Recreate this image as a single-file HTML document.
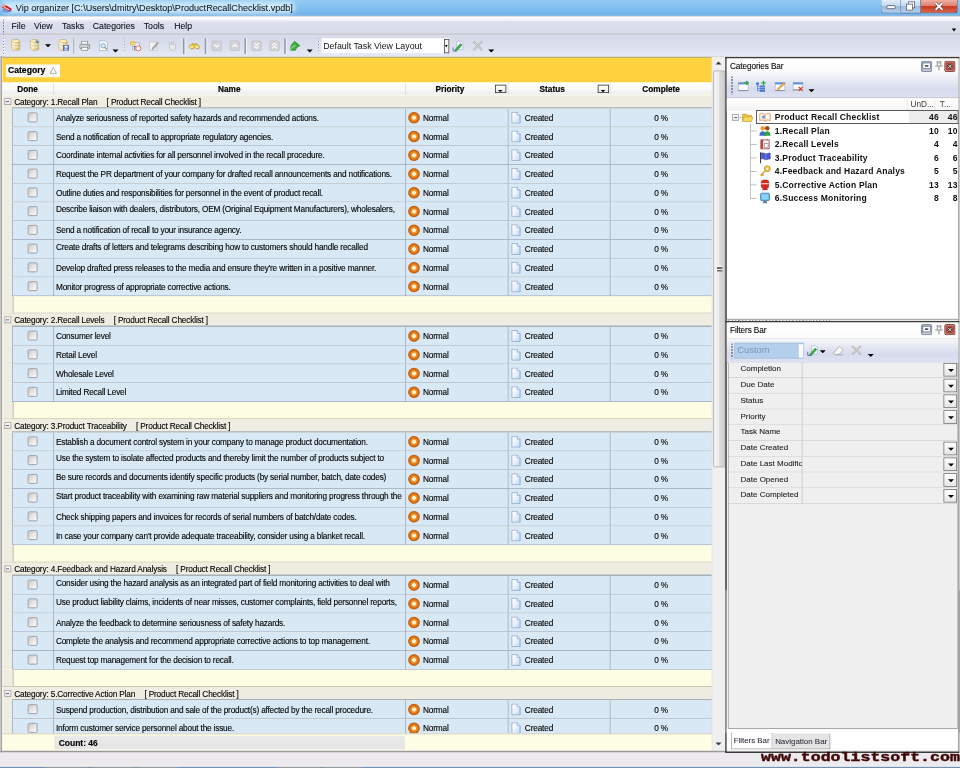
<!DOCTYPE html><html><head><meta charset="utf-8"><style>
*{box-sizing:border-box}
html,body{margin:0;padding:0;width:960px;height:768px;overflow:hidden;background:#eceaec}
#root{position:absolute;left:0;top:0;width:1280px;height:1024px;transform:scale(0.75);transform-origin:0 0;overflow:hidden;font-family:"Liberation Sans",sans-serif;color:#000;background:#eceaec}
.a{position:absolute}
#title{left:0;top:0;width:1280px;height:22.3px;background:linear-gradient(#92cbf4,#6fb4ec);border-bottom:1.2px solid #8c9cac}
#title .t{position:absolute;left:21px;top:3.5px;font-size:12.1px;letter-spacing:0px;color:#101820;-webkit-text-stroke:0.1px #101820;white-space:pre}
#menu{left:0;top:22.3px;width:1280px;height:24.2px;background:linear-gradient(#ffffff 0,#f4f5fa 20%,#dcdfec 32%,#d8dce9 100%);border-bottom:1px solid #a4a8b4}
#menu span{position:absolute;top:6px;font-size:11.6px;color:#10101c;-webkit-text-stroke:0.12px #10101c}
#tool{left:0;top:46.5px;width:1280px;height:29.5px;background:linear-gradient(#d6dae8,#dde1ee 60%,#e6e9f5);border-bottom:1.3px solid #d4d2c8}
#gridborder{left:0;top:74.5px;width:2.7px;height:928px;background:#a3a3a3;border-left:1.2px solid #d4d4d4}
#grid{left:2.7px;top:76px;width:964px;height:925px;background:#fefde8;overflow:hidden}
#band{position:absolute;left:0;top:0;width:947px;height:34px;background:#fed23e;border-top:1.3px solid #aaa27c}
#chip{position:absolute;left:5.3px;top:8.7px;width:72px;height:17.3px;background:linear-gradient(#ffffff,#f6f5ef);font-weight:bold;font-size:11.5px;-webkit-text-stroke:0.25px #000}
#chip span{position:absolute;left:2.6px;top:1.5px}
#chip i{position:absolute;left:62px;top:4px;width:0;height:0;border-left:4px solid transparent;border-right:4px solid transparent;border-bottom:8px solid #a8a8a8}
#chip i:after{content:"";position:absolute;left:-2.5px;top:2.5px;border-left:2.5px solid transparent;border-right:2.5px solid transparent;border-bottom:4.5px solid #fff}
#hdr{position:absolute;left:0;top:34px;width:947px;height:16px;background:linear-gradient(#ffffff,#fafafa 50%,#ededed)}
#hdr div{position:absolute;top:0;height:16.5px;font-weight:bold;font-size:11px;text-align:center;line-height:16.5px;color:#000;-webkit-text-stroke:0.25px #000}
#hdr .sp{width:1px;background:#dcdcdc}
.fb{position:absolute;top:2.8px;width:14.7px;height:11.6px;border:1.3px solid #2a2a2a;background:linear-gradient(#fff,#e8e8e8)}
.fb:after{content:"";position:absolute;left:3.2px;top:6px;border-left:3.5px solid transparent;border-right:3.5px solid transparent;border-top:3.5px solid #000}
#view{position:absolute;left:0;top:50.5px;width:947px;height:851.5px;overflow:hidden;background:#fefde8}
.gh:after{content:"";position:absolute;left:13.6px;right:0;bottom:0;height:1.2px;background:#a6b0b8}
.gh{position:absolute;left:0;width:947px;height:18px;background:#efede2;font-size:11px;letter-spacing:-0.2px;color:#000;-webkit-text-stroke:0.15px #000}
.gh .ex{position:absolute;left:3.2px;top:4.6px;width:9px;height:9px;border:1px solid #9c9c9c;background:linear-gradient(#fff,#e6e6e6)}
.gh .ex:after{content:"";position:absolute;left:1.5px;top:3px;width:4px;height:1.2px;background:#3a3a6a}
.gh .gt{position:absolute;left:16.2px;top:3.3px;white-space:pre}
.gh .gt b{font-weight:normal;margin-left:12.3px}
.rw{position:absolute;left:0;width:947px;height:25px;background:#efede2}
.c{position:absolute;top:0;height:25px;background:#d9e8f5;border-bottom:1px solid #9ca9b6;border-left:1px solid #9ca9b6;font-size:11px;letter-spacing:-0.24px;color:#000;-webkit-text-stroke:0.15px #000;white-space:nowrap;overflow:hidden}
.dn{left:13.6px;width:54.7px}
.nm{left:68.3px;width:469.4px;padding-left:2.6px;line-height:24px}
.nm.top{line-height:18.5px}
.pr{left:537.7px;width:136.4px}
.st{left:674.1px;width:136.5px}
.cp{left:810.6px;width:136.4px;text-align:center;line-height:24px;border-right:1px solid #b8c0c8}
.cb{position:absolute;left:19.3px;top:5.3px;width:13.3px;height:13.3px;border:1.2px solid #8c8e92;border-radius:2px;background:linear-gradient(135deg,#c6c6c6,#e6e6e6 50%,#fbfbfb)}
.pi{position:absolute;left:2.6px;top:4.3px}
.pr span{position:absolute;left:22.6px;top:0;line-height:24px;font-size:11px;letter-spacing:-0.2px}
.di{position:absolute;left:3.3px;top:4.3px}
.st span{position:absolute;left:22px;top:0;line-height:24px;font-size:11px;letter-spacing:-0.2px}
.ft{position:absolute;left:0;width:947px;height:23px;background:#fdfde4;border-bottom:1.6px solid #b6b3a4}
.ft:before{content:"";position:absolute;left:0;top:0;width:14.6px;height:22px;background:#efede2;border-right:1px solid #aeaeae}
#sum{position:absolute;left:0;top:902px;width:947px;height:23.3px;background:#fefde6;border-top:1px solid #c8c4b4}
#sum .cnt{position:absolute;left:70.3px;top:2px;width:467px;height:17.7px;background:linear-gradient(#ebebeb,#e4e4e4);border-left:1px solid #d8d8d8;font-weight:bold;font-size:11.3px;padding-left:4.3px;line-height:19.5px;-webkit-text-stroke:0.2px #000}
#vs{position:absolute;left:946.6px;top:0;width:17.4px;height:925.3px;background:#f0f0f0;border-left:1px solid #e4e4e4}
#vs .up{position:absolute;left:0;top:0;width:16px;height:18px}
#vs .up:after{content:"";position:absolute;left:4px;top:6px;border-left:4px solid transparent;border-right:4px solid transparent;border-bottom:4.5px solid #3c3c3c}
#vs .dwn{position:absolute;left:0;top:907px;width:16px;height:18px}
#vs .dwn:after{content:"";position:absolute;left:4px;top:7px;border-left:4px solid transparent;border-right:4px solid transparent;border-top:4.5px solid #3c3c3c}
#vs .th{position:absolute;left:0.5px;top:18px;width:16px;height:529px;border:1px solid #a3a3a3;border-radius:2px;background:linear-gradient(90deg,#f6f6f6,#ececec 45%,#dadada 55%,#cfcfcf)}
#vs .th:after{content:"";position:absolute;left:4px;top:259px;width:7px;height:8px;background:repeating-linear-gradient(#6a6a6a 0,#6a6a6a 1px,#f0f0f0 1px,#f0f0f0 2px)}
#gbot{left:0;top:1001.3px;width:967px;height:2px;background:#9a9a9a}
#task{left:0;top:1021px;width:1280px;height:3px;background:linear-gradient(#8aa6c4,#6584a8);border-top:0.8px solid #fafafa}
.tb{position:absolute;top:0.5px;height:3px;background:#dcdcdc;border:1px solid #8a8a8a;border-bottom:none}
.panel{position:absolute;background:#fff;border:2px solid #3a3a3a;border-right:1.6px solid #5a5a5a}
#cat{left:967px;top:76px;width:312px;height:352px;border-bottom:none}
.ptitle{position:absolute;left:0;top:0;width:100%;height:20.3px;background:linear-gradient(#ffffff,#fbfbfc);border-bottom:1px solid #e6e6ea;font-size:10.5px;color:#202020}
.ptitle span{position:absolute;left:4.3px;top:4.3px;font-size:11px;letter-spacing:-0.15px;color:#000;-webkit-text-stroke:0.1px #000}
.pbtn{position:absolute;top:1.8px;width:14px;height:14px;border-radius:2px}
.ptool{position:absolute;left:0;width:100%;background:linear-gradient(#f6f7fb,#e4e7f2 35%,#d6dbed 65%,#dde1f1);border-bottom:1.3px solid #a6a8b2}
.th2{position:absolute;left:0;top:52.5px;width:100%;height:17px;background:linear-gradient(#ffffff,#f4f4f4);font-size:10.5px;color:#505050}
.tr{position:absolute;left:0;height:18px;width:100%;font-weight:bold;font-size:11.4px;letter-spacing:0.25px;color:#111;white-space:nowrap}
.tr .tx{position:absolute;left:64px;top:2.3px}
.tr .n1{position:absolute;right:26px;top:2.3px}
.tr .n2{position:absolute;right:1px;top:2.3px}
#filt{left:967px;top:427.5px;width:312px;height:576px;background:#f0f0f0}
.fr{position:absolute;left:2.3px;width:306px;height:21px;border-bottom:1px solid #d2d2d2;background:#efefef;font-size:10.7px;color:#222}
.fr .nmf{position:absolute;left:0;top:0;width:99px;height:20px;padding-left:16px;line-height:16.5px;-webkit-text-stroke:0.12px #222;border-right:1.3px solid #c4c4c4;white-space:nowrap;overflow:hidden}
.fr .dd{position:absolute;right:1px;top:1.3px;width:18px;height:18px;border:1px solid #6f6f6f;background:linear-gradient(#ffffff,#e6e6e6)}
.fr .dd:after{content:"";position:absolute;left:4.5px;top:7px;border-left:4px solid transparent;border-right:4px solid transparent;border-top:4.5px solid #000}
#wm{left:1014.7px;top:1002px;transform:scaleY(0.82);transform-origin:0 0;font-family:"Liberation Mono",monospace;font-weight:bold;font-size:22.1px;color:#3e0606;-webkit-text-stroke:0.7px #3e0606;white-space:pre;line-height:22px}
</style></head><body><div id="root"><svg width="0" height="0" style="position:absolute"><defs><radialGradient id="og" cx="50%" cy="50%" r="50%"><stop offset="0" stop-color="#fffbe8"/><stop offset="0.28" stop-color="#fff0c8"/><stop offset="0.38" stop-color="#f5a848"/><stop offset="0.55" stop-color="#e88420"/><stop offset="0.85" stop-color="#d06810"/><stop offset="1" stop-color="#b85a10"/></radialGradient><linearGradient id="dg" x1="0" y1="0" x2="1" y2="1"><stop offset="0" stop-color="#ffffff"/><stop offset="0.5" stop-color="#eaf2fb"/><stop offset="1" stop-color="#bcd4f0"/></linearGradient></defs></svg><div id="title" class="a"><div style="position:absolute;left:2px;top:2px;width:392px;height:16px;background:#cde8fa;border-radius:8px;filter:blur(3px)"></div><svg style="position:absolute;left:1px;top:3px" width="16" height="15" viewBox="0 0 16 15"><ellipse cx="8" cy="11" rx="6.5" ry="3" fill="#7a98d8"/><path d="M1 6c2-3 5-3 8-1l6 4-3 3-6-3c-2-1-4-1-5-3z" fill="#d82828"/><path d="M2 5l9 5" stroke="#fff" stroke-width="1.3"/><circle cx="4" cy="4" r="2" fill="#f0a0a0"/></svg><span class="t">Vip organizer [C:\Users\dmitry\Desktop\ProductRecallChecklist.vpdb]</span><div style="position:absolute;left:1174px;top:0;width:27px;height:18px;border:1px solid #5f7a9a;border-top:none;border-radius:0 0 0 5px;background:linear-gradient(#e2eefa,#c4d8ee 45%,#9dbbe0 50%,#b4cdea)"><div style="position:absolute;left:7px;top:7px;width:12px;height:5px;background:#fff;border:1px solid #4a5060;border-radius:1px"></div></div><div style="position:absolute;left:1201px;top:0;width:27px;height:18px;border:1px solid #5f7a9a;border-top:none;border-left:none;background:linear-gradient(#e2eefa,#c4d8ee 45%,#9dbbe0 50%,#b4cdea)"><div style="position:absolute;left:10px;top:2px;width:9px;height:9px;background:#fff;border:1.5px solid #4a5060"></div><div style="position:absolute;left:7px;top:5px;width:9px;height:9px;background:#fff;border:1.5px solid #4a5060"></div></div><div style="position:absolute;left:1228px;top:0;width:49px;height:18px;border:1px solid #7a3a30;border-top:none;border-left:none;border-radius:0 0 5px 0;background:linear-gradient(#f0b0a0,#e08070 45%,#c83a24 50%,#d86a50)"><svg style="position:absolute;left:17px;top:2px" width="14" height="13" viewBox="0 0 14 13"><path d="M2.5 2l9 9M11.5 2l-9 9" stroke="#4a2a2a" stroke-width="4"/><path d="M2.5 2l9 9M11.5 2l-9 9" stroke="#fff" stroke-width="2.4"/></svg></div></div><div id="menu" class="a"><div style="position:absolute;left:4.3px;top:4.5px;width:1.6px;height:20px;background:repeating-linear-gradient(#ffffff 0,#ffffff 1.6px,transparent 1.6px,transparent 4px)"></div><div style="position:absolute;left:3.5px;top:3.7px;width:1.6px;height:20px;background:repeating-linear-gradient(#6f7588 0,#6f7588 1.6px,transparent 1.6px,transparent 4px)"></div><span style="left:15.3px">File</span><span style="left:45.2px">View</span><span style="left:82.5px">Tasks</span><span style="left:123.7px">Categories</span><span style="left:191.6px">Tools</span><span style="left:232.3px">Help</span><div style="position:absolute;left:1269px;top:16px;border-left:3.3px solid transparent;border-right:3.3px solid transparent;border-top:4px solid #000"></div></div><div id="tool" class="a"><div style="position:absolute;left:4.3px;top:5.6px;width:1.6px;height:24px;background:repeating-linear-gradient(#ffffff 0,#ffffff 1.6px,transparent 1.6px,transparent 4px)"></div><div style="position:absolute;left:3.5px;top:4.8px;width:1.6px;height:24px;background:repeating-linear-gradient(#6f7588 0,#6f7588 1.6px,transparent 1.6px,transparent 4px)"></div><svg style="position:absolute;left:13px;top:5.5px" width="16" height="16" viewBox="0 0 16 16"><defs><linearGradient id="dbg" x1="0" x2="1" y1="0" y2="0"><stop offset="0" stop-color="#fffbe6"/><stop offset="0.35" stop-color="#f6ecc0"/><stop offset="1" stop-color="#cfb264"/></linearGradient></defs><path d="M2.5 2.8c0-2.4 11-2.4 11 0v10.4c0 2.6-11 2.6-11 0z" fill="url(#dbg)" stroke="#b39a52" stroke-width="0.7"/><ellipse cx="8" cy="2.8" rx="5.5" ry="1.9" fill="#fff4c0" stroke="#c0a45a" stroke-width="0.6"/><path d="M2.5 6.3c0 2.2 11 2.2 11 0M2.5 9.8c0 2.2 11 2.2 11 0" fill="none" stroke="#fffdf0" stroke-width="1"/><path d="M2.5 7c0 2.2 11 2.2 11 0M2.5 10.5c0 2.2 11 2.2 11 0" fill="none" stroke="#c8ae62" stroke-width="0.6"/></svg><svg style="position:absolute;left:38px;top:5.5px" width="16" height="16" viewBox="0 0 16 16"><defs><linearGradient id="dbg" x1="0" x2="1" y1="0" y2="0"><stop offset="0" stop-color="#fffbe6"/><stop offset="0.35" stop-color="#f6ecc0"/><stop offset="1" stop-color="#cfb264"/></linearGradient></defs><path d="M2.5 2.8c0-2.4 11-2.4 11 0v10.4c0 2.6-11 2.6-11 0z" fill="url(#dbg)" stroke="#b39a52" stroke-width="0.7"/><ellipse cx="8" cy="2.8" rx="5.5" ry="1.9" fill="#fff4c0" stroke="#c0a45a" stroke-width="0.6"/><path d="M2.5 6.3c0 2.2 11 2.2 11 0M2.5 9.8c0 2.2 11 2.2 11 0" fill="none" stroke="#fffdf0" stroke-width="1"/><path d="M2.5 7c0 2.2 11 2.2 11 0M2.5 10.5c0 2.2 11 2.2 11 0" fill="none" stroke="#c8ae62" stroke-width="0.6"/><path d="M10 1l4 3-2 1z" fill="#4a78c8"/><path d="M9.5 2.5l3 2.5" stroke="#4a78c8" stroke-width="1.6"/></svg><div style="position:absolute;left:59.5px;top:12.5px;width:0;height:0;border-left:4px solid transparent;border-right:4px solid transparent;border-top:4.5px solid #000"></div><svg style="position:absolute;left:76px;top:5.5px" width="16" height="16" viewBox="0 0 16 16"><defs><linearGradient id="dbg" x1="0" x2="1" y1="0" y2="0"><stop offset="0" stop-color="#fffbe6"/><stop offset="0.35" stop-color="#f6ecc0"/><stop offset="1" stop-color="#cfb264"/></linearGradient></defs><path d="M2.5 2.8c0-2.4 11-2.4 11 0v10.4c0 2.6-11 2.6-11 0z" fill="url(#dbg)" stroke="#b39a52" stroke-width="0.7"/><ellipse cx="8" cy="2.8" rx="5.5" ry="1.9" fill="#fff4c0" stroke="#c0a45a" stroke-width="0.6"/><path d="M2.5 6.3c0 2.2 11 2.2 11 0M2.5 9.8c0 2.2 11 2.2 11 0" fill="none" stroke="#fffdf0" stroke-width="1"/><path d="M2.5 7c0 2.2 11 2.2 11 0M2.5 10.5c0 2.2 11 2.2 11 0" fill="none" stroke="#c8ae62" stroke-width="0.6"/><rect x="8.5" y="8.5" width="7" height="7" fill="#5470c8" stroke="#2f3f88" stroke-width="0.6"/><rect x="10" y="9" width="4" height="2.6" fill="#fff"/><rect x="10" y="12.5" width="4" height="3" fill="#c8d4f0"/></svg><div style="position:absolute;left:97.5px;top:4px;width:1.6px;height:21px;background:#9096a6;box-shadow:1.3px 0 0 #f4f6fb"></div><svg style="position:absolute;left:105px;top:6px" width="16" height="16" viewBox="0 0 16 16"><rect x="4" y="2" width="8" height="4" fill="#fff" stroke="#777" stroke-width="0.8"/><rect x="1.5" y="6" width="13" height="6" rx="1" fill="#cfd3da" stroke="#6f747c" stroke-width="0.8"/><rect x="4" y="10" width="8" height="4" fill="#fff" stroke="#777" stroke-width="0.8"/><circle cx="12.5" cy="8" r="0.8" fill="#3a9a3a"/></svg><svg style="position:absolute;left:130px;top:6px" width="16" height="16" viewBox="0 0 16 16"><path d="M2.5 1.5h8l2.5 2.5v10.5h-10.5z" fill="#fafcff" stroke="#8ea3bf" stroke-width="0.8"/><circle cx="7.5" cy="8" r="3" fill="#d6ecfa" stroke="#5a8fc0" stroke-width="0.9"/><path d="M9.5 10l3 3" stroke="#d08a40" stroke-width="1.5"/></svg><div style="position:absolute;left:150.0px;top:19px;width:0;height:0;border-left:4px solid transparent;border-right:4px solid transparent;border-top:4.5px solid #000"></div><div style="position:absolute;left:166.3px;top:4.8px;width:1.6px;height:20px;background:repeating-linear-gradient(#ffffff 0,#ffffff 1.6px,transparent 1.6px,transparent 4px)"></div><div style="position:absolute;left:165.5px;top:4px;width:1.6px;height:20px;background:repeating-linear-gradient(#6f7588 0,#6f7588 1.6px,transparent 1.6px,transparent 4px)"></div><svg style="position:absolute;left:173px;top:6px" width="16" height="16" viewBox="0 0 16 16"><path d="M4 4h9v10h-9z" fill="#eef3fb" stroke="#8aa0c0" stroke-width="0.8"/><path d="M1 2h6l1 1.5h-7z" fill="#f0d060"/><rect x="1" y="3" width="6" height="4" fill="#f5dc70" stroke="#c8a030" stroke-width="0.6"/><text x="5" y="13" font-size="6" font-weight="bold" fill="#333" font-family="Liberation Sans">T</text><circle cx="11.5" cy="11.5" r="3.4" fill="#fff" stroke="#e04040" stroke-width="1"/></svg><svg style="position:absolute;left:197px;top:6px" width="16" height="16" viewBox="0 0 16 16"><rect x="2" y="3" width="10" height="11" fill="#f4f4f4" stroke="#b8b8b8" stroke-width="0.8"/><path d="M6 11l7-8 1.5 1.5-7 8-2 .5z" fill="#b0b0b0" stroke="#8a8a8a" stroke-width="0.6"/></svg><svg style="position:absolute;left:221px;top:6px" width="16" height="16" viewBox="0 0 16 16"><path d="M5 8c0-2 1-3 2-2l1 1V3c0-1 2-1 2 0v4l1-1c1-.5 2 0 2 1v4c0 2-1 3-3 3H8c-2 0-3-2-3-3z" fill="#e8e8e8" stroke="#b0b0b0" stroke-width="0.7"/><path d="M2 3l2 2M4 2l1 2" stroke="#bbb" stroke-width="0.8"/></svg><div style="position:absolute;left:244px;top:4px;width:1.6px;height:21px;background:#9096a6;box-shadow:1.3px 0 0 #f4f6fb"></div><svg style="position:absolute;left:250.5px;top:6px" width="16" height="16" viewBox="0 0 16 16"><path d="M1 9l4-4 3 1 3-1 4 4-1 3-3 0-2-2-2 2-3 0z" fill="#e8c040" stroke="#a08020" stroke-width="0.7"/><ellipse cx="4.5" cy="9.5" rx="2.5" ry="1.5" fill="#f8e8a0"/><ellipse cx="11.5" cy="9.5" rx="2.5" ry="1.5" fill="#f8e8a0"/></svg><div style="position:absolute;left:273px;top:4px;width:1.6px;height:21px;background:#9096a6;box-shadow:1.3px 0 0 #f4f6fb"></div><svg style="position:absolute;left:280.5px;top:6px" width="16" height="16" viewBox="0 0 16 16"><rect x="1.5" y="1.5" width="13" height="13" rx="2" fill="#d2d3d6" stroke="#bcbdc2" stroke-width="0.8"/><path d="M5 6.5l3 3 3-3" fill="none" stroke="#fff" stroke-width="1.6"/></svg><svg style="position:absolute;left:305px;top:6px" width="16" height="16" viewBox="0 0 16 16"><rect x="1.5" y="1.5" width="13" height="13" rx="2" fill="#d2d3d6" stroke="#bcbdc2" stroke-width="0.8"/><path d="M5 9.5l3-3 3 3" fill="none" stroke="#fff" stroke-width="1.6"/></svg><div style="position:absolute;left:326px;top:4px;width:1.6px;height:21px;background:#9096a6;box-shadow:1.3px 0 0 #f4f6fb"></div><svg style="position:absolute;left:334px;top:6px" width="16" height="16" viewBox="0 0 16 16"><rect x="1.5" y="1.5" width="13" height="13" rx="2" fill="#d2d3d6" stroke="#bcbdc2" stroke-width="0.8"/><path d="M5 4.5l3 3 3-3M5 8.5l3 3 3-3" fill="none" stroke="#fff" stroke-width="1.4"/></svg><svg style="position:absolute;left:357.5px;top:6px" width="16" height="16" viewBox="0 0 16 16"><rect x="1.5" y="1.5" width="13" height="13" rx="2" fill="#d2d3d6" stroke="#bcbdc2" stroke-width="0.8"/><path d="M5 7.5l3-3 3 3M5 11.5l3-3 3 3" fill="none" stroke="#fff" stroke-width="1.4"/></svg><div style="position:absolute;left:379px;top:4px;width:1.6px;height:21px;background:#9096a6;box-shadow:1.3px 0 0 #f4f6fb"></div><svg style="position:absolute;left:385px;top:6px" width="16" height="16" viewBox="0 0 16 16"><path d="M2 14c0-5 2-9 6-12l7 6c-3 1-5 3-6 6z" fill="#3fae3f" stroke="#1f7a2a" stroke-width="0.7"/><path d="M2 14c1-3 3-5 7-6" fill="none" stroke="#cfe8cf" stroke-width="1.2"/></svg><div style="position:absolute;left:408.5px;top:19px;width:0;height:0;border-left:4px solid transparent;border-right:4px solid transparent;border-top:4.5px solid #000"></div><div style="position:absolute;left:424.3px;top:4.8px;width:1.6px;height:20px;background:repeating-linear-gradient(#ffffff 0,#ffffff 1.6px,transparent 1.6px,transparent 4px)"></div><div style="position:absolute;left:423.5px;top:4px;width:1.6px;height:20px;background:repeating-linear-gradient(#6f7588 0,#6f7588 1.6px,transparent 1.6px,transparent 4px)"></div><div style="position:absolute;left:429px;top:4.3px;width:170px;height:20.5px;background:#fff;font-size:11.75px;line-height:20px;padding-left:2px;color:#111;white-space:nowrap">Default Task View Layout<div style="position:absolute;left:163px;top:1px;width:7px;height:19px;border:1px solid #3c3c3c;background:#f6f6f6"></div><div style="position:absolute;left:164px;top:9px;border-left:2.5px solid transparent;border-right:2.5px solid transparent;border-top:3px solid #000"></div></div><svg style="position:absolute;left:603px;top:6px" width="16" height="16" viewBox="0 0 16 16"><path d="M6 2h6l2 2v9h-8z" fill="#eef4fb" stroke="#9ab0cc" stroke-width="0.7"/><path d="M3 14l8-9 2 2-8 9z" fill="#3cae4a" stroke="#1f7a2a" stroke-width="0.6"/><path d="M1 10v5h4" fill="none" stroke="#6a6ac8" stroke-width="1.3"/></svg><svg style="position:absolute;left:629px;top:6px" width="16" height="16" viewBox="0 0 16 16"><path d="M3 3l10 10M13 3l-10 10" stroke="#b8b8b8" stroke-width="2.6" stroke-linecap="round"/><path d="M3 3l10 10M13 3l-10 10" stroke="#d8d8d8" stroke-width="1"/></svg><div style="position:absolute;left:650.5px;top:19px;width:0;height:0;border-left:4px solid transparent;border-right:4px solid transparent;border-top:4.5px solid #000"></div></div><div id="gridborder" class="a"></div><div id="grid" class="a"><div id="band"><div id="chip"><span>Category</span><svg style="position:absolute;left:58.5px;top:3.5px" width="10" height="10" viewBox="0 0 10 10"><path d="M5 1L9.2 8.8H0.8z" fill="#fff" stroke="#a0a0a0" stroke-width="1.1"/></svg></div></div><div id="hdr"><div style="left:0;width:68.3px">Done</div><div class="sp" style="left:68.3px"></div><div style="left:68.3px;width:469.4px">Name</div><div class="sp" style="left:537.7px"></div><div style="left:537.7px;width:119px">Priority</div><span class="fb" style="left:657.3px"></span><div class="sp" style="left:674.1px"></div><div style="left:674.1px;width:119px">Status</div><span class="fb" style="left:794.6px"></span><div class="sp" style="left:810.6px"></div><div style="left:810.6px;width:136.4px">Complete</div></div><div id="view"><div class="gh" style="top:0px"><span class="ex"></span><span class="gt">Category: 1.Recall Plan<b>[ Product Recall Checklist ]</b></span></div><div class="rw" style="top:18px"><div class="c dn"><span class="cb"></span></div><div class="c nm">Analyze seriousness of reported safety hazards and recommended actions.</div><div class="c pr"><svg class="pi" width="16" height="16" viewBox="0 0 16 16"><circle cx="8" cy="8" r="7.6" fill="url(#og)"/><circle cx="8" cy="8" r="7.1" fill="none" stroke="#c46010" stroke-width="0.8" stroke-dasharray="1 0.6"/></svg><span>Normal</span></div><div class="c st"><svg class="di" width="14" height="16" viewBox="0 0 14 16"><path d="M1.5 0.8h7.2l3.8 3.8v10.6h-11z" fill="url(#dg)" stroke="#7f9cc4" stroke-width="0.9"/><path d="M8.7 0.8v3.8h3.8" fill="#eef4fb" stroke="#7f9cc4" stroke-width="0.9"/><path d="M11.8 5.5v9" stroke="#a8c4e8" stroke-width="1.2"/></svg><span>Created</span></div><div class="c cp">0 %</div></div><div class="rw" style="top:43px"><div class="c dn"><span class="cb"></span></div><div class="c nm">Send a notification of recall to appropriate regulatory agencies.</div><div class="c pr"><svg class="pi" width="16" height="16" viewBox="0 0 16 16"><circle cx="8" cy="8" r="7.6" fill="url(#og)"/><circle cx="8" cy="8" r="7.1" fill="none" stroke="#c46010" stroke-width="0.8" stroke-dasharray="1 0.6"/></svg><span>Normal</span></div><div class="c st"><svg class="di" width="14" height="16" viewBox="0 0 14 16"><path d="M1.5 0.8h7.2l3.8 3.8v10.6h-11z" fill="url(#dg)" stroke="#7f9cc4" stroke-width="0.9"/><path d="M8.7 0.8v3.8h3.8" fill="#eef4fb" stroke="#7f9cc4" stroke-width="0.9"/><path d="M11.8 5.5v9" stroke="#a8c4e8" stroke-width="1.2"/></svg><span>Created</span></div><div class="c cp">0 %</div></div><div class="rw" style="top:68px"><div class="c dn"><span class="cb"></span></div><div class="c nm">Coordinate internal activities for all personnel involved in the recall procedure.</div><div class="c pr"><svg class="pi" width="16" height="16" viewBox="0 0 16 16"><circle cx="8" cy="8" r="7.6" fill="url(#og)"/><circle cx="8" cy="8" r="7.1" fill="none" stroke="#c46010" stroke-width="0.8" stroke-dasharray="1 0.6"/></svg><span>Normal</span></div><div class="c st"><svg class="di" width="14" height="16" viewBox="0 0 14 16"><path d="M1.5 0.8h7.2l3.8 3.8v10.6h-11z" fill="url(#dg)" stroke="#7f9cc4" stroke-width="0.9"/><path d="M8.7 0.8v3.8h3.8" fill="#eef4fb" stroke="#7f9cc4" stroke-width="0.9"/><path d="M11.8 5.5v9" stroke="#a8c4e8" stroke-width="1.2"/></svg><span>Created</span></div><div class="c cp">0 %</div></div><div class="rw" style="top:93px"><div class="c dn"><span class="cb"></span></div><div class="c nm">Request the PR department of your company for drafted recall announcements and notifications.</div><div class="c pr"><svg class="pi" width="16" height="16" viewBox="0 0 16 16"><circle cx="8" cy="8" r="7.6" fill="url(#og)"/><circle cx="8" cy="8" r="7.1" fill="none" stroke="#c46010" stroke-width="0.8" stroke-dasharray="1 0.6"/></svg><span>Normal</span></div><div class="c st"><svg class="di" width="14" height="16" viewBox="0 0 14 16"><path d="M1.5 0.8h7.2l3.8 3.8v10.6h-11z" fill="url(#dg)" stroke="#7f9cc4" stroke-width="0.9"/><path d="M8.7 0.8v3.8h3.8" fill="#eef4fb" stroke="#7f9cc4" stroke-width="0.9"/><path d="M11.8 5.5v9" stroke="#a8c4e8" stroke-width="1.2"/></svg><span>Created</span></div><div class="c cp">0 %</div></div><div class="rw" style="top:118px"><div class="c dn"><span class="cb"></span></div><div class="c nm">Outline duties and responsibilities for personnel in the event of product recall.</div><div class="c pr"><svg class="pi" width="16" height="16" viewBox="0 0 16 16"><circle cx="8" cy="8" r="7.6" fill="url(#og)"/><circle cx="8" cy="8" r="7.1" fill="none" stroke="#c46010" stroke-width="0.8" stroke-dasharray="1 0.6"/></svg><span>Normal</span></div><div class="c st"><svg class="di" width="14" height="16" viewBox="0 0 14 16"><path d="M1.5 0.8h7.2l3.8 3.8v10.6h-11z" fill="url(#dg)" stroke="#7f9cc4" stroke-width="0.9"/><path d="M8.7 0.8v3.8h3.8" fill="#eef4fb" stroke="#7f9cc4" stroke-width="0.9"/><path d="M11.8 5.5v9" stroke="#a8c4e8" stroke-width="1.2"/></svg><span>Created</span></div><div class="c cp">0 %</div></div><div class="rw" style="top:143px"><div class="c dn"><span class="cb"></span></div><div class="c nm top">Describe liaison with dealers, distributors, OEM (Original Equipment Manufacturers), wholesalers,</div><div class="c pr"><svg class="pi" width="16" height="16" viewBox="0 0 16 16"><circle cx="8" cy="8" r="7.6" fill="url(#og)"/><circle cx="8" cy="8" r="7.1" fill="none" stroke="#c46010" stroke-width="0.8" stroke-dasharray="1 0.6"/></svg><span>Normal</span></div><div class="c st"><svg class="di" width="14" height="16" viewBox="0 0 14 16"><path d="M1.5 0.8h7.2l3.8 3.8v10.6h-11z" fill="url(#dg)" stroke="#7f9cc4" stroke-width="0.9"/><path d="M8.7 0.8v3.8h3.8" fill="#eef4fb" stroke="#7f9cc4" stroke-width="0.9"/><path d="M11.8 5.5v9" stroke="#a8c4e8" stroke-width="1.2"/></svg><span>Created</span></div><div class="c cp">0 %</div></div><div class="rw" style="top:168px"><div class="c dn"><span class="cb"></span></div><div class="c nm">Send a notification of recall to your insurance agency.</div><div class="c pr"><svg class="pi" width="16" height="16" viewBox="0 0 16 16"><circle cx="8" cy="8" r="7.6" fill="url(#og)"/><circle cx="8" cy="8" r="7.1" fill="none" stroke="#c46010" stroke-width="0.8" stroke-dasharray="1 0.6"/></svg><span>Normal</span></div><div class="c st"><svg class="di" width="14" height="16" viewBox="0 0 14 16"><path d="M1.5 0.8h7.2l3.8 3.8v10.6h-11z" fill="url(#dg)" stroke="#7f9cc4" stroke-width="0.9"/><path d="M8.7 0.8v3.8h3.8" fill="#eef4fb" stroke="#7f9cc4" stroke-width="0.9"/><path d="M11.8 5.5v9" stroke="#a8c4e8" stroke-width="1.2"/></svg><span>Created</span></div><div class="c cp">0 %</div></div><div class="rw" style="top:193px"><div class="c dn"><span class="cb"></span></div><div class="c nm top">Create drafts of letters and telegrams describing how to customers should handle recalled</div><div class="c pr"><svg class="pi" width="16" height="16" viewBox="0 0 16 16"><circle cx="8" cy="8" r="7.6" fill="url(#og)"/><circle cx="8" cy="8" r="7.1" fill="none" stroke="#c46010" stroke-width="0.8" stroke-dasharray="1 0.6"/></svg><span>Normal</span></div><div class="c st"><svg class="di" width="14" height="16" viewBox="0 0 14 16"><path d="M1.5 0.8h7.2l3.8 3.8v10.6h-11z" fill="url(#dg)" stroke="#7f9cc4" stroke-width="0.9"/><path d="M8.7 0.8v3.8h3.8" fill="#eef4fb" stroke="#7f9cc4" stroke-width="0.9"/><path d="M11.8 5.5v9" stroke="#a8c4e8" stroke-width="1.2"/></svg><span>Created</span></div><div class="c cp">0 %</div></div><div class="rw" style="top:218px"><div class="c dn"><span class="cb"></span></div><div class="c nm">Develop drafted press releases to the media and ensure they're written in a positive manner.</div><div class="c pr"><svg class="pi" width="16" height="16" viewBox="0 0 16 16"><circle cx="8" cy="8" r="7.6" fill="url(#og)"/><circle cx="8" cy="8" r="7.1" fill="none" stroke="#c46010" stroke-width="0.8" stroke-dasharray="1 0.6"/></svg><span>Normal</span></div><div class="c st"><svg class="di" width="14" height="16" viewBox="0 0 14 16"><path d="M1.5 0.8h7.2l3.8 3.8v10.6h-11z" fill="url(#dg)" stroke="#7f9cc4" stroke-width="0.9"/><path d="M8.7 0.8v3.8h3.8" fill="#eef4fb" stroke="#7f9cc4" stroke-width="0.9"/><path d="M11.8 5.5v9" stroke="#a8c4e8" stroke-width="1.2"/></svg><span>Created</span></div><div class="c cp">0 %</div></div><div class="rw" style="top:243px"><div class="c dn"><span class="cb"></span></div><div class="c nm">Monitor progress of appropriate corrective actions.</div><div class="c pr"><svg class="pi" width="16" height="16" viewBox="0 0 16 16"><circle cx="8" cy="8" r="7.6" fill="url(#og)"/><circle cx="8" cy="8" r="7.1" fill="none" stroke="#c46010" stroke-width="0.8" stroke-dasharray="1 0.6"/></svg><span>Normal</span></div><div class="c st"><svg class="di" width="14" height="16" viewBox="0 0 14 16"><path d="M1.5 0.8h7.2l3.8 3.8v10.6h-11z" fill="url(#dg)" stroke="#7f9cc4" stroke-width="0.9"/><path d="M8.7 0.8v3.8h3.8" fill="#eef4fb" stroke="#7f9cc4" stroke-width="0.9"/><path d="M11.8 5.5v9" stroke="#a8c4e8" stroke-width="1.2"/></svg><span>Created</span></div><div class="c cp">0 %</div></div><div class="ft" style="top:268px"></div><div class="gh" style="top:291px"><span class="ex"></span><span class="gt">Category: 2.Recall Levels<b>[ Product Recall Checklist ]</b></span></div><div class="rw" style="top:309px"><div class="c dn"><span class="cb"></span></div><div class="c nm">Consumer level</div><div class="c pr"><svg class="pi" width="16" height="16" viewBox="0 0 16 16"><circle cx="8" cy="8" r="7.6" fill="url(#og)"/><circle cx="8" cy="8" r="7.1" fill="none" stroke="#c46010" stroke-width="0.8" stroke-dasharray="1 0.6"/></svg><span>Normal</span></div><div class="c st"><svg class="di" width="14" height="16" viewBox="0 0 14 16"><path d="M1.5 0.8h7.2l3.8 3.8v10.6h-11z" fill="url(#dg)" stroke="#7f9cc4" stroke-width="0.9"/><path d="M8.7 0.8v3.8h3.8" fill="#eef4fb" stroke="#7f9cc4" stroke-width="0.9"/><path d="M11.8 5.5v9" stroke="#a8c4e8" stroke-width="1.2"/></svg><span>Created</span></div><div class="c cp">0 %</div></div><div class="rw" style="top:334px"><div class="c dn"><span class="cb"></span></div><div class="c nm">Retail Level</div><div class="c pr"><svg class="pi" width="16" height="16" viewBox="0 0 16 16"><circle cx="8" cy="8" r="7.6" fill="url(#og)"/><circle cx="8" cy="8" r="7.1" fill="none" stroke="#c46010" stroke-width="0.8" stroke-dasharray="1 0.6"/></svg><span>Normal</span></div><div class="c st"><svg class="di" width="14" height="16" viewBox="0 0 14 16"><path d="M1.5 0.8h7.2l3.8 3.8v10.6h-11z" fill="url(#dg)" stroke="#7f9cc4" stroke-width="0.9"/><path d="M8.7 0.8v3.8h3.8" fill="#eef4fb" stroke="#7f9cc4" stroke-width="0.9"/><path d="M11.8 5.5v9" stroke="#a8c4e8" stroke-width="1.2"/></svg><span>Created</span></div><div class="c cp">0 %</div></div><div class="rw" style="top:359px"><div class="c dn"><span class="cb"></span></div><div class="c nm">Wholesale Level</div><div class="c pr"><svg class="pi" width="16" height="16" viewBox="0 0 16 16"><circle cx="8" cy="8" r="7.6" fill="url(#og)"/><circle cx="8" cy="8" r="7.1" fill="none" stroke="#c46010" stroke-width="0.8" stroke-dasharray="1 0.6"/></svg><span>Normal</span></div><div class="c st"><svg class="di" width="14" height="16" viewBox="0 0 14 16"><path d="M1.5 0.8h7.2l3.8 3.8v10.6h-11z" fill="url(#dg)" stroke="#7f9cc4" stroke-width="0.9"/><path d="M8.7 0.8v3.8h3.8" fill="#eef4fb" stroke="#7f9cc4" stroke-width="0.9"/><path d="M11.8 5.5v9" stroke="#a8c4e8" stroke-width="1.2"/></svg><span>Created</span></div><div class="c cp">0 %</div></div><div class="rw" style="top:384px"><div class="c dn"><span class="cb"></span></div><div class="c nm">Limited Recall Level</div><div class="c pr"><svg class="pi" width="16" height="16" viewBox="0 0 16 16"><circle cx="8" cy="8" r="7.6" fill="url(#og)"/><circle cx="8" cy="8" r="7.1" fill="none" stroke="#c46010" stroke-width="0.8" stroke-dasharray="1 0.6"/></svg><span>Normal</span></div><div class="c st"><svg class="di" width="14" height="16" viewBox="0 0 14 16"><path d="M1.5 0.8h7.2l3.8 3.8v10.6h-11z" fill="url(#dg)" stroke="#7f9cc4" stroke-width="0.9"/><path d="M8.7 0.8v3.8h3.8" fill="#eef4fb" stroke="#7f9cc4" stroke-width="0.9"/><path d="M11.8 5.5v9" stroke="#a8c4e8" stroke-width="1.2"/></svg><span>Created</span></div><div class="c cp">0 %</div></div><div class="ft" style="top:409px"></div><div class="gh" style="top:432px"><span class="ex"></span><span class="gt">Category: 3.Product Traceability<b>[ Product Recall Checklist ]</b></span></div><div class="rw" style="top:450px"><div class="c dn"><span class="cb"></span></div><div class="c nm">Establish a document control system in your company to manage product documentation.</div><div class="c pr"><svg class="pi" width="16" height="16" viewBox="0 0 16 16"><circle cx="8" cy="8" r="7.6" fill="url(#og)"/><circle cx="8" cy="8" r="7.1" fill="none" stroke="#c46010" stroke-width="0.8" stroke-dasharray="1 0.6"/></svg><span>Normal</span></div><div class="c st"><svg class="di" width="14" height="16" viewBox="0 0 14 16"><path d="M1.5 0.8h7.2l3.8 3.8v10.6h-11z" fill="url(#dg)" stroke="#7f9cc4" stroke-width="0.9"/><path d="M8.7 0.8v3.8h3.8" fill="#eef4fb" stroke="#7f9cc4" stroke-width="0.9"/><path d="M11.8 5.5v9" stroke="#a8c4e8" stroke-width="1.2"/></svg><span>Created</span></div><div class="c cp">0 %</div></div><div class="rw" style="top:475px"><div class="c dn"><span class="cb"></span></div><div class="c nm top">Use the system to isolate affected products and thereby limit the number of products subject to</div><div class="c pr"><svg class="pi" width="16" height="16" viewBox="0 0 16 16"><circle cx="8" cy="8" r="7.6" fill="url(#og)"/><circle cx="8" cy="8" r="7.1" fill="none" stroke="#c46010" stroke-width="0.8" stroke-dasharray="1 0.6"/></svg><span>Normal</span></div><div class="c st"><svg class="di" width="14" height="16" viewBox="0 0 14 16"><path d="M1.5 0.8h7.2l3.8 3.8v10.6h-11z" fill="url(#dg)" stroke="#7f9cc4" stroke-width="0.9"/><path d="M8.7 0.8v3.8h3.8" fill="#eef4fb" stroke="#7f9cc4" stroke-width="0.9"/><path d="M11.8 5.5v9" stroke="#a8c4e8" stroke-width="1.2"/></svg><span>Created</span></div><div class="c cp">0 %</div></div><div class="rw" style="top:500px"><div class="c dn"><span class="cb"></span></div><div class="c nm top">Be sure records and documents identify specific products (by serial number, batch, date codes)</div><div class="c pr"><svg class="pi" width="16" height="16" viewBox="0 0 16 16"><circle cx="8" cy="8" r="7.6" fill="url(#og)"/><circle cx="8" cy="8" r="7.1" fill="none" stroke="#c46010" stroke-width="0.8" stroke-dasharray="1 0.6"/></svg><span>Normal</span></div><div class="c st"><svg class="di" width="14" height="16" viewBox="0 0 14 16"><path d="M1.5 0.8h7.2l3.8 3.8v10.6h-11z" fill="url(#dg)" stroke="#7f9cc4" stroke-width="0.9"/><path d="M8.7 0.8v3.8h3.8" fill="#eef4fb" stroke="#7f9cc4" stroke-width="0.9"/><path d="M11.8 5.5v9" stroke="#a8c4e8" stroke-width="1.2"/></svg><span>Created</span></div><div class="c cp">0 %</div></div><div class="rw" style="top:525px"><div class="c dn"><span class="cb"></span></div><div class="c nm top">Start product traceability with examining raw material suppliers and monitoring progress through the</div><div class="c pr"><svg class="pi" width="16" height="16" viewBox="0 0 16 16"><circle cx="8" cy="8" r="7.6" fill="url(#og)"/><circle cx="8" cy="8" r="7.1" fill="none" stroke="#c46010" stroke-width="0.8" stroke-dasharray="1 0.6"/></svg><span>Normal</span></div><div class="c st"><svg class="di" width="14" height="16" viewBox="0 0 14 16"><path d="M1.5 0.8h7.2l3.8 3.8v10.6h-11z" fill="url(#dg)" stroke="#7f9cc4" stroke-width="0.9"/><path d="M8.7 0.8v3.8h3.8" fill="#eef4fb" stroke="#7f9cc4" stroke-width="0.9"/><path d="M11.8 5.5v9" stroke="#a8c4e8" stroke-width="1.2"/></svg><span>Created</span></div><div class="c cp">0 %</div></div><div class="rw" style="top:550px"><div class="c dn"><span class="cb"></span></div><div class="c nm">Check shipping papers and invoices for records of serial numbers of batch/date codes.</div><div class="c pr"><svg class="pi" width="16" height="16" viewBox="0 0 16 16"><circle cx="8" cy="8" r="7.6" fill="url(#og)"/><circle cx="8" cy="8" r="7.1" fill="none" stroke="#c46010" stroke-width="0.8" stroke-dasharray="1 0.6"/></svg><span>Normal</span></div><div class="c st"><svg class="di" width="14" height="16" viewBox="0 0 14 16"><path d="M1.5 0.8h7.2l3.8 3.8v10.6h-11z" fill="url(#dg)" stroke="#7f9cc4" stroke-width="0.9"/><path d="M8.7 0.8v3.8h3.8" fill="#eef4fb" stroke="#7f9cc4" stroke-width="0.9"/><path d="M11.8 5.5v9" stroke="#a8c4e8" stroke-width="1.2"/></svg><span>Created</span></div><div class="c cp">0 %</div></div><div class="rw" style="top:575px"><div class="c dn"><span class="cb"></span></div><div class="c nm">In case your company can't provide adequate traceability, consider using a blanket recall.</div><div class="c pr"><svg class="pi" width="16" height="16" viewBox="0 0 16 16"><circle cx="8" cy="8" r="7.6" fill="url(#og)"/><circle cx="8" cy="8" r="7.1" fill="none" stroke="#c46010" stroke-width="0.8" stroke-dasharray="1 0.6"/></svg><span>Normal</span></div><div class="c st"><svg class="di" width="14" height="16" viewBox="0 0 14 16"><path d="M1.5 0.8h7.2l3.8 3.8v10.6h-11z" fill="url(#dg)" stroke="#7f9cc4" stroke-width="0.9"/><path d="M8.7 0.8v3.8h3.8" fill="#eef4fb" stroke="#7f9cc4" stroke-width="0.9"/><path d="M11.8 5.5v9" stroke="#a8c4e8" stroke-width="1.2"/></svg><span>Created</span></div><div class="c cp">0 %</div></div><div class="ft" style="top:600px"></div><div class="gh" style="top:623px"><span class="ex"></span><span class="gt">Category: 4.Feedback and Hazard Analysis<b>[ Product Recall Checklist ]</b></span></div><div class="rw" style="top:641px"><div class="c dn"><span class="cb"></span></div><div class="c nm top">Consider using the hazard analysis as an integrated part of field monitoring activities to deal with</div><div class="c pr"><svg class="pi" width="16" height="16" viewBox="0 0 16 16"><circle cx="8" cy="8" r="7.6" fill="url(#og)"/><circle cx="8" cy="8" r="7.1" fill="none" stroke="#c46010" stroke-width="0.8" stroke-dasharray="1 0.6"/></svg><span>Normal</span></div><div class="c st"><svg class="di" width="14" height="16" viewBox="0 0 14 16"><path d="M1.5 0.8h7.2l3.8 3.8v10.6h-11z" fill="url(#dg)" stroke="#7f9cc4" stroke-width="0.9"/><path d="M8.7 0.8v3.8h3.8" fill="#eef4fb" stroke="#7f9cc4" stroke-width="0.9"/><path d="M11.8 5.5v9" stroke="#a8c4e8" stroke-width="1.2"/></svg><span>Created</span></div><div class="c cp">0 %</div></div><div class="rw" style="top:666px"><div class="c dn"><span class="cb"></span></div><div class="c nm top">Use product liability claims, incidents of near misses, customer complaints, field personnel reports,</div><div class="c pr"><svg class="pi" width="16" height="16" viewBox="0 0 16 16"><circle cx="8" cy="8" r="7.6" fill="url(#og)"/><circle cx="8" cy="8" r="7.1" fill="none" stroke="#c46010" stroke-width="0.8" stroke-dasharray="1 0.6"/></svg><span>Normal</span></div><div class="c st"><svg class="di" width="14" height="16" viewBox="0 0 14 16"><path d="M1.5 0.8h7.2l3.8 3.8v10.6h-11z" fill="url(#dg)" stroke="#7f9cc4" stroke-width="0.9"/><path d="M8.7 0.8v3.8h3.8" fill="#eef4fb" stroke="#7f9cc4" stroke-width="0.9"/><path d="M11.8 5.5v9" stroke="#a8c4e8" stroke-width="1.2"/></svg><span>Created</span></div><div class="c cp">0 %</div></div><div class="rw" style="top:691px"><div class="c dn"><span class="cb"></span></div><div class="c nm">Analyze the feedback to determine seriousness of safety hazards.</div><div class="c pr"><svg class="pi" width="16" height="16" viewBox="0 0 16 16"><circle cx="8" cy="8" r="7.6" fill="url(#og)"/><circle cx="8" cy="8" r="7.1" fill="none" stroke="#c46010" stroke-width="0.8" stroke-dasharray="1 0.6"/></svg><span>Normal</span></div><div class="c st"><svg class="di" width="14" height="16" viewBox="0 0 14 16"><path d="M1.5 0.8h7.2l3.8 3.8v10.6h-11z" fill="url(#dg)" stroke="#7f9cc4" stroke-width="0.9"/><path d="M8.7 0.8v3.8h3.8" fill="#eef4fb" stroke="#7f9cc4" stroke-width="0.9"/><path d="M11.8 5.5v9" stroke="#a8c4e8" stroke-width="1.2"/></svg><span>Created</span></div><div class="c cp">0 %</div></div><div class="rw" style="top:716px"><div class="c dn"><span class="cb"></span></div><div class="c nm">Complete the analysis and recommend appropriate corrective actions to top management.</div><div class="c pr"><svg class="pi" width="16" height="16" viewBox="0 0 16 16"><circle cx="8" cy="8" r="7.6" fill="url(#og)"/><circle cx="8" cy="8" r="7.1" fill="none" stroke="#c46010" stroke-width="0.8" stroke-dasharray="1 0.6"/></svg><span>Normal</span></div><div class="c st"><svg class="di" width="14" height="16" viewBox="0 0 14 16"><path d="M1.5 0.8h7.2l3.8 3.8v10.6h-11z" fill="url(#dg)" stroke="#7f9cc4" stroke-width="0.9"/><path d="M8.7 0.8v3.8h3.8" fill="#eef4fb" stroke="#7f9cc4" stroke-width="0.9"/><path d="M11.8 5.5v9" stroke="#a8c4e8" stroke-width="1.2"/></svg><span>Created</span></div><div class="c cp">0 %</div></div><div class="rw" style="top:741px"><div class="c dn"><span class="cb"></span></div><div class="c nm">Request top management for the decision to recall.</div><div class="c pr"><svg class="pi" width="16" height="16" viewBox="0 0 16 16"><circle cx="8" cy="8" r="7.6" fill="url(#og)"/><circle cx="8" cy="8" r="7.1" fill="none" stroke="#c46010" stroke-width="0.8" stroke-dasharray="1 0.6"/></svg><span>Normal</span></div><div class="c st"><svg class="di" width="14" height="16" viewBox="0 0 14 16"><path d="M1.5 0.8h7.2l3.8 3.8v10.6h-11z" fill="url(#dg)" stroke="#7f9cc4" stroke-width="0.9"/><path d="M8.7 0.8v3.8h3.8" fill="#eef4fb" stroke="#7f9cc4" stroke-width="0.9"/><path d="M11.8 5.5v9" stroke="#a8c4e8" stroke-width="1.2"/></svg><span>Created</span></div><div class="c cp">0 %</div></div><div class="ft" style="top:766px"></div><div class="gh" style="top:789px"><span class="ex"></span><span class="gt">Category: 5.Corrective Action Plan<b>[ Product Recall Checklist ]</b></span></div><div class="rw" style="top:807px"><div class="c dn"><span class="cb"></span></div><div class="c nm">Suspend production, distribution and sale of the product(s) affected by the recall procedure.</div><div class="c pr"><svg class="pi" width="16" height="16" viewBox="0 0 16 16"><circle cx="8" cy="8" r="7.6" fill="url(#og)"/><circle cx="8" cy="8" r="7.1" fill="none" stroke="#c46010" stroke-width="0.8" stroke-dasharray="1 0.6"/></svg><span>Normal</span></div><div class="c st"><svg class="di" width="14" height="16" viewBox="0 0 14 16"><path d="M1.5 0.8h7.2l3.8 3.8v10.6h-11z" fill="url(#dg)" stroke="#7f9cc4" stroke-width="0.9"/><path d="M8.7 0.8v3.8h3.8" fill="#eef4fb" stroke="#7f9cc4" stroke-width="0.9"/><path d="M11.8 5.5v9" stroke="#a8c4e8" stroke-width="1.2"/></svg><span>Created</span></div><div class="c cp">0 %</div></div><div class="rw" style="top:832px"><div class="c dn"><span class="cb"></span></div><div class="c nm">Inform customer service personnel about the issue.</div><div class="c pr"><svg class="pi" width="16" height="16" viewBox="0 0 16 16"><circle cx="8" cy="8" r="7.6" fill="url(#og)"/><circle cx="8" cy="8" r="7.1" fill="none" stroke="#c46010" stroke-width="0.8" stroke-dasharray="1 0.6"/></svg><span>Normal</span></div><div class="c st"><svg class="di" width="14" height="16" viewBox="0 0 14 16"><path d="M1.5 0.8h7.2l3.8 3.8v10.6h-11z" fill="url(#dg)" stroke="#7f9cc4" stroke-width="0.9"/><path d="M8.7 0.8v3.8h3.8" fill="#eef4fb" stroke="#7f9cc4" stroke-width="0.9"/><path d="M11.8 5.5v9" stroke="#a8c4e8" stroke-width="1.2"/></svg><span>Created</span></div><div class="c cp">0 %</div></div><div class="ft" style="top:857px"></div></div><div id="sum"><div class="cnt">Count: 46</div></div><div id="vs"><div class="up"></div><div class="th"></div><div class="dwn"></div></div></div><div id="gbot" class="a"></div><div id="task" class="a"><div class="tb" style="left:60px;width:57px"></div><div class="tb" style="left:123px;width:57px"></div><div class="tb" style="left:183px;width:54px"></div><div class="tb" style="left:370px;width:58px"></div><div class="tb" style="left:431px;width:52px"></div></div><div id="cat" class="panel"><div class="ptitle"><span>Categories Bar</span><svg style="position:absolute;left:259px;top:2.5px" width="15" height="15" viewBox="0 0 15 15"><rect x="0.6" y="0.6" width="13.8" height="13.8" rx="2" fill="#a6b0c0" stroke="#7c889c" stroke-width="1.2"/><rect x="2.5" y="3" width="10" height="7.5" fill="#fff" stroke="#5a6478" stroke-width="0.8"/><rect x="5" y="5.6" width="5" height="2.4" rx="1" fill="#4a5262"/><path d="M2.5 12.3h10" stroke="#e8ecf2" stroke-width="0.9"/></svg><svg style="position:absolute;left:276.5px;top:3px" width="12" height="14" viewBox="0 0 12 14"><path d="M2.5 1.5h7M3.8 1.5v5M8.2 1.5v5M1 7h10M6 7v6" stroke="#7a7a7a" stroke-width="1.1" fill="none"/><path d="M3.8 3.5h4.4" stroke="#bdbdbd" stroke-width="1"/></svg><svg style="position:absolute;left:290.2px;top:2.5px" width="15" height="15" viewBox="0 0 15 15"><rect x="0.6" y="0.6" width="13.8" height="13.8" rx="2" fill="#d08a80" stroke="#7a3a34" stroke-width="1.2"/><rect x="2.2" y="2.2" width="10.6" height="10.6" rx="1" fill="#a84a40"/><path d="M5 5l5 5M10 5l-5 5" stroke="#3a1a1a" stroke-width="2.6"/><path d="M5 5l5 5M10 5l-5 5" stroke="#fff" stroke-width="1.3"/></svg></div><div class="ptool" style="top:20.3px;height:32.5px"><div style="position:absolute;left:6.8px;top:4.8px;width:1.6px;height:24px;background:repeating-linear-gradient(#ffffff 0,#ffffff 1.6px,transparent 1.6px,transparent 4px)"></div><div style="position:absolute;left:6px;top:4px;width:1.6px;height:24px;background:repeating-linear-gradient(#6f7588 0,#6f7588 1.6px,transparent 1.6px,transparent 4px)"></div><svg style="position:absolute;left:14px;top:8.5px" width="16" height="16" viewBox="0 0 16 16"><rect x="1.5" y="3" width="13" height="11" fill="#fbfbfd" stroke="#9aa3b5" stroke-width="0.7"/><rect x="1.5" y="3" width="13" height="2.5" fill="#5a8ed6"/><path d="M9 3.5h5M12 1l2.5 2.5L12 6" fill="none" stroke="#2fa84a" stroke-width="1.8"/><rect x="1.5" y="13" width="13" height="1.5" fill="#8a93a6"/></svg><svg style="position:absolute;left:37.5px;top:8.5px" width="16" height="16" viewBox="0 0 16 16"><rect x="1" y="3" width="4" height="3" fill="#4a7ad0"/><path d="M3 6v8M3 8h3M3 11h3M3 14h3" stroke="#4a7ad0" stroke-width="1"/><rect x="6" y="7" width="7" height="2.5" fill="#4a7ad0"/><rect x="6" y="10" width="7" height="2.5" fill="#4a7ad0"/><rect x="6" y="13" width="7" height="2.5" fill="#4a7ad0"/><path d="M11 0.5v6M8 3.5h6" stroke="#2fa84a" stroke-width="1.8"/></svg><svg style="position:absolute;left:62.5px;top:8.5px" width="16" height="16" viewBox="0 0 16 16"><rect x="1.5" y="3" width="13" height="11" fill="#fbfbfd" stroke="#9aa3b5" stroke-width="0.7"/><rect x="1.5" y="3" width="13" height="2.5" fill="#5a8ed6"/><path d="M4 12l9-9 1.5 1.5-9 9z" fill="#f0c050" stroke="#c05030" stroke-width="0.6"/><rect x="1.5" y="13" width="13" height="1.5" fill="#8a93a6"/></svg><svg style="position:absolute;left:86.5px;top:8.5px" width="16" height="16" viewBox="0 0 16 16"><rect x="1.5" y="3" width="13" height="11" fill="#fbfbfd" stroke="#9aa3b5" stroke-width="0.7"/><rect x="1.5" y="3" width="13" height="2.5" fill="#5a8ed6"/><rect x="1.5" y="12" width="8" height="1.5" fill="#8a93a6"/><path d="M9 9l5 5M14 9l-5 5" stroke="#e23c2c" stroke-width="1.5"/></svg><div style="position:absolute;left:109.0px;top:20.5px;width:0;height:0;border-left:4px solid transparent;border-right:4px solid transparent;border-top:4.5px solid #000"></div></div><div class="th2"><span style="position:absolute;left:245px;top:2px;font-size:11px;color:#404040">UnD...</span><span style="position:absolute;left:284px;top:2px;font-size:11px;color:#404040">T...</span><div style="position:absolute;left:240px;top:1px;width:1px;height:15px;background:#e6e6e6"></div><div style="position:absolute;left:277px;top:1px;width:1px;height:15px;background:#e6e6e6"></div></div><div style="position:absolute;left:30.5px;top:86px;width:0;height:101px;border-left:1px solid #b0b0b0"></div><div style="position:absolute;left:7px;top:73.5px;width:9px;height:9px;border:1px solid #9c9c9c;background:linear-gradient(#fff,#e6e6e6)"><div style="position:absolute;left:1.5px;top:3px;width:4px;height:1.2px;background:#3a3a6a"></div></div><div style="position:absolute;left:16px;top:78px;width:4px;border-top:1px solid #b0b0b0"></div><svg style="position:absolute;left:19.5px;top:69.5px" width="16" height="16" viewBox="0 0 16 16"><path d="M1 4h5l1 1.5h6v8h-12z" fill="#e8c040" stroke="#b08a20" stroke-width="0.6"/><path d="M3 8h12l-2 6h-12z" fill="#f8dc60" stroke="#b08a20" stroke-width="0.6"/></svg><div class="tr" style="top:69.4px"><div style="position:absolute;left:243px;top:1px;width:67px;height:16px;background:#ededed"></div><div style="position:absolute;left:38.5px;top:-0.5px;width:270px;height:18.6px;border:1.6px solid #262626"></div><svg style="position:absolute;left:42.5px;top:1px" width="16" height="16" viewBox="0 0 16 16"><path d="M1 4c3-2 5-1 7 1 2-2 4-3 7-1v9c-3-2-5-1-7 1-2-2-4-3-7-1z" fill="#fff3e0" stroke="#c08050" stroke-width="0.9"/><path d="M8 5v9" stroke="#c08050" stroke-width="0.7"/><circle cx="6" cy="8" r="2.2" fill="#70a0e0"/></svg><span class="tx">Product Recall Checklist</span><span class="n1">46</span><span class="n2">46</span></div><div class="tr" style="top:87.4px"><div style="position:absolute;left:31px;top:9px;width:9px;border-top:1px solid #b0b0b0"></div><svg style="position:absolute;left:42.5px;top:1px" width="16" height="16" viewBox="0 0 16 16"><circle cx="5" cy="5" r="3" fill="#f0a030"/><path d="M0.5 15c0-4 2-6 4.5-6s4.5 2 4.5 6z" fill="#3a6ad0"/><circle cx="11" cy="5" r="3" fill="#a05020"/><path d="M6.5 15c0-4 2-6 4.5-6s4.5 2 4.5 6z" fill="#30a040"/></svg><span class="tx">1.Recall Plan</span><span class="n1">10</span><span class="n2">10</span></div><div class="tr" style="top:105.4px"><div style="position:absolute;left:31px;top:9px;width:9px;border-top:1px solid #b0b0b0"></div><svg style="position:absolute;left:42.5px;top:1px" width="16" height="16" viewBox="0 0 16 16"><rect x="2.5" y="2.5" width="11" height="12" fill="#f4f4f4" stroke="#a03030" stroke-width="1"/><rect x="2.5" y="2.5" width="3" height="12" fill="#c04040"/><rect x="7" y="7" width="5" height="6" fill="#fff" stroke="#555" stroke-width="0.6"/><path d="M5 1v3M11 1v3" stroke="#777" stroke-width="1"/></svg><span class="tx">2.Recall Levels</span><span class="n1">4</span><span class="n2">4</span></div><div class="tr" style="top:123.4px"><div style="position:absolute;left:31px;top:9px;width:9px;border-top:1px solid #b0b0b0"></div><svg style="position:absolute;left:42.5px;top:1px" width="16" height="16" viewBox="0 0 16 16"><path d="M2 1v15" stroke="#333" stroke-width="1.3"/><path d="M3 2c3-1 4 1 6 1s3-1 6-1v8c-3 0-4 1-6 1s-3-2-6-1z" fill="#4a5ad0" stroke="#2a3590" stroke-width="0.6"/><path d="M9 3v8" stroke="#8a9af0" stroke-width="0.8"/></svg><span class="tx">3.Product Traceability</span><span class="n1">6</span><span class="n2">6</span></div><div class="tr" style="top:141.4px"><div style="position:absolute;left:31px;top:9px;width:9px;border-top:1px solid #b0b0b0"></div><svg style="position:absolute;left:42.5px;top:1px" width="16" height="16" viewBox="0 0 16 16"><circle cx="11" cy="5" r="4" fill="#f0c840" stroke="#a08020" stroke-width="0.8"/><circle cx="11" cy="5" r="1.3" fill="#fff"/><path d="M8 8l-6 6M4 12l2 2M3 13l1.5 1.5" stroke="#d8a830" stroke-width="2"/></svg><span class="tx">4.Feedback and Hazard Analys</span><span class="n1">5</span><span class="n2">5</span></div><div class="tr" style="top:159.4px"><div style="position:absolute;left:31px;top:9px;width:9px;border-top:1px solid #b0b0b0"></div><svg style="position:absolute;left:42.5px;top:1px" width="16" height="16" viewBox="0 0 16 16"><rect x="3" y="2" width="10" height="11" rx="3" fill="#d82a20" stroke="#901810" stroke-width="0.7"/><path d="M3 7h10" stroke="#fff" stroke-width="1.2"/><path d="M5 13l-1 3 2-1 2 1 2-1 2 1-1-3" fill="#b02018"/></svg><span class="tx">5.Corrective Action Plan</span><span class="n1">13</span><span class="n2">13</span></div><div class="tr" style="top:177.4px"><div style="position:absolute;left:31px;top:9px;width:9px;border-top:1px solid #b0b0b0"></div><svg style="position:absolute;left:42.5px;top:1px" width="16" height="16" viewBox="0 0 16 16"><rect x="2" y="1.5" width="12" height="10" rx="1.5" fill="#5ab0e8" stroke="#2a6aa0" stroke-width="0.8"/><rect x="3.5" y="3" width="9" height="7" fill="#8ad0f8"/><path d="M6 12h4l1 3h-6z" fill="#6a7a8a"/></svg><span class="tx">6.Success Monitoring</span><span class="n1">8</span><span class="n2">8</span></div><div style="position:absolute;left:0;top:347.3px;width:100%;height:1.3px;background:#b0b0b0"></div><div style="position:absolute;left:2px;top:348.6px;width:136px;height:2.8px;background:repeating-linear-gradient(90deg,#6a6a6a 0,#6a6a6a 1.5px,#d0d0d0 1.5px,#d0d0d0 3px,#fff 3px,#fff 4.5px);opacity:0.7"></div></div><div id="filt" class="panel"><div style="position:absolute;left:0;top:-6px;width:100%;height:5px;"></div><div class="ptitle" style="height:22px"><span style="top:4px">Filters Bar</span><svg style="position:absolute;left:259px;top:2.5px" width="15" height="15" viewBox="0 0 15 15"><rect x="0.6" y="0.6" width="13.8" height="13.8" rx="2" fill="#a6b0c0" stroke="#7c889c" stroke-width="1.2"/><rect x="2.5" y="3" width="10" height="7.5" fill="#fff" stroke="#5a6478" stroke-width="0.8"/><rect x="5" y="5.6" width="5" height="2.4" rx="1" fill="#4a5262"/><path d="M2.5 12.3h10" stroke="#e8ecf2" stroke-width="0.9"/></svg><svg style="position:absolute;left:276.5px;top:3px" width="12" height="14" viewBox="0 0 12 14"><path d="M2.5 1.5h7M3.8 1.5v5M8.2 1.5v5M1 7h10M6 7v6" stroke="#7a7a7a" stroke-width="1.1" fill="none"/><path d="M3.8 3.5h4.4" stroke="#bdbdbd" stroke-width="1"/></svg><svg style="position:absolute;left:290.2px;top:2.5px" width="15" height="15" viewBox="0 0 15 15"><rect x="0.6" y="0.6" width="13.8" height="13.8" rx="2" fill="#d08a80" stroke="#7a3a34" stroke-width="1.2"/><rect x="2.2" y="2.2" width="10.6" height="10.6" rx="1" fill="#a84a40"/><path d="M5 5l5 5M10 5l-5 5" stroke="#3a1a1a" stroke-width="2.6"/><path d="M5 5l5 5M10 5l-5 5" stroke="#fff" stroke-width="1.3"/></svg></div><div class="ptool" style="top:22px;height:32.5px"><div style="position:absolute;left:6.8px;top:6.8px;width:1.6px;height:20px;background:repeating-linear-gradient(#ffffff 0,#ffffff 1.6px,transparent 1.6px,transparent 4px)"></div><div style="position:absolute;left:6px;top:6px;width:1.6px;height:20px;background:repeating-linear-gradient(#6f7588 0,#6f7588 1.6px,transparent 1.6px,transparent 4px)"></div><div style="position:absolute;left:10px;top:5px;width:92.5px;height:21.5px;background:#b4cfec;border:1px solid #a6bedc;font-size:12.5px;color:#7898bc;padding-left:3px;line-height:19.5px">Custom<div style="position:absolute;left:84.5px;top:1px;width:6px;height:18px;background:#fafafa"></div></div><svg style="position:absolute;left:106.5px;top:7px" width="16" height="16" viewBox="0 0 16 16"><path d="M6 2h6l2 2v9h-8z" fill="#eef4fb" stroke="#9ab0cc" stroke-width="0.7"/><path d="M3 14l8-9 2 2-8 9z" fill="#3cae4a" stroke="#1f7a2a" stroke-width="0.6"/><path d="M1 10v5h4" fill="none" stroke="#6a6ac8" stroke-width="1.3"/></svg><div style="position:absolute;left:123.5px;top:15px;width:0;height:0;border-left:4px solid transparent;border-right:4px solid transparent;border-top:4.5px solid #000"></div><svg style="position:absolute;left:140px;top:7px" width="16" height="16" viewBox="0 0 16 16"><path d="M2 12l7-8c1-1 2-1 3 0l2 2c1 1 1 2 0 3l-5 5h-4z" fill="#f4f4f4" stroke="#9a9a9a" stroke-width="0.9"/><path d="M5 14h10" stroke="#9a9a9a" stroke-width="0.9"/></svg><svg style="position:absolute;left:165.3px;top:7px" width="16" height="16" viewBox="0 0 16 16"><path d="M3 3l10 10M13 3l-10 10" stroke="#b8b8b8" stroke-width="2.6" stroke-linecap="round"/><path d="M3 3l10 10M13 3l-10 10" stroke="#d8d8d8" stroke-width="1"/></svg><div style="position:absolute;left:187.5px;top:20px;width:0;height:0;border-left:4px solid transparent;border-right:4px solid transparent;border-top:4.5px solid #000"></div></div><div class="fr" style="top:53.2px"><div class="nmf">Completion</div><div class="dd"></div></div><div class="fr" style="top:74.2px"><div class="nmf">Due Date</div><div class="dd"></div></div><div class="fr" style="top:95.2px"><div class="nmf">Status</div><div class="dd"></div></div><div class="fr" style="top:116.2px"><div class="nmf">Priority</div><div class="dd"></div></div><div class="fr" style="top:137.2px"><div class="nmf">Task Name</div></div><div class="fr" style="top:158.2px"><div class="nmf">Date Created</div><div class="dd"></div></div><div class="fr" style="top:179.2px"><div class="nmf">Date Last Modific</div><div class="dd"></div></div><div class="fr" style="top:200.2px"><div class="nmf">Date Opened</div><div class="dd"></div></div><div class="fr" style="top:221.2px"><div class="nmf">Date Completed</div><div class="dd"></div></div><div style="position:absolute;left:-2px;top:357.5px;width:2px;height:190px;background:linear-gradient(90deg,#92949c,#b8bcc4)"></div><div style="position:absolute;right:-1.6px;top:357.5px;width:1.6px;height:190px;background:#a0a2a8"></div><div style="position:absolute;left:2.3px;top:54px;width:306px;height:488px;border-left:1px solid #a8a8a8;border-right:1px solid #b8b8b8;border-bottom:1.3px solid #909090"></div><div style="position:absolute;left:0;top:542.5px;width:308px;height:28px;background:#fff"><div style="position:absolute;left:5.5px;top:4.7px;width:55px;height:22.5px;background:#fff;border:1px solid #a0a0a0;border-top:none;font-size:10.5px;line-height:21.5px;padding-left:2.8px;color:#303040;-webkit-text-stroke:0.1px #303040">Filters Bar</div><div style="position:absolute;left:60.5px;top:6.3px;width:77.5px;height:20.9px;background:#e4e4e4;border:1px solid #a8a8a8;border-top:none;border-left:none;font-size:10.6px;line-height:20px;padding-left:4px;color:#303040;-webkit-text-stroke:0.1px #303040">Navigation Bar</div></div></div><div id="wm" class="a">www.todolistsoft.com</div></div></body></html>
